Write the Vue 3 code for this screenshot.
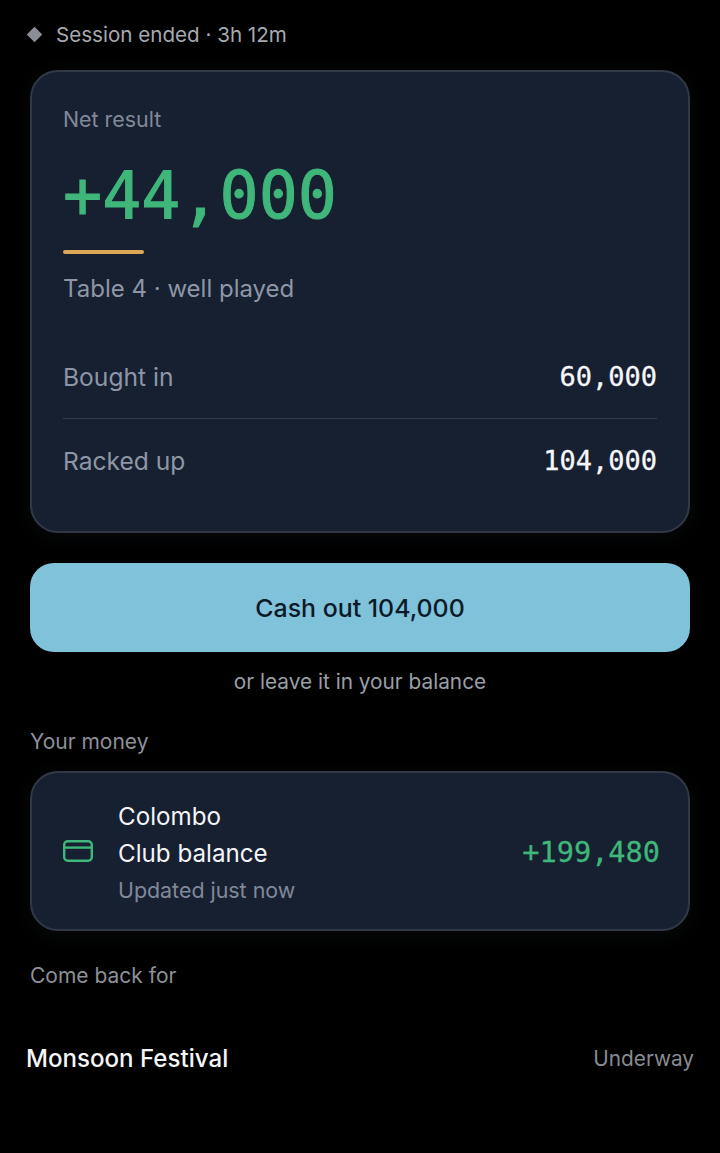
<script setup>
const rows = [
  { label: 'Bought in', value: '60,000' },
  { label: 'Racked up', value: '104,000' },
]
</script>

<template>
  <main class="page">
    <div class="status">
      <span class="diamond"></span>
      <span>Session ended · 3h 12m</span>
    </div>

    <section class="card result">
      <div class="eyebrow">Net result</div>
      <div class="net">+44,000</div>
      <div class="rule"></div>
      <div class="note">Table 4 · well played</div>
      <div class="rows">
        <div v-for="r in rows" :key="r.label" class="row">
          <span class="row-label">{{ r.label }}</span>
          <span class="row-value">{{ r.value }}</span>
        </div>
      </div>
    </section>

    <button class="cash">Cash out 104,000</button>
    <div class="leave">or leave it in your balance</div>

    <div class="section-title money-title">Your money</div>
    <section class="card money">
      <svg class="wallet" width="30" height="22" viewBox="0 0 30 22" fill="none" stroke="#3fb67a" stroke-width="2.4">
        <rect x="1.2" y="1.2" width="27.6" height="19.6" rx="3.6" />
        <path d="M1.2 7.6h27.6" />
      </svg>
      <div class="money-text">
        <div class="money-name">Colombo<br />Club balance</div>
        <div class="money-sub">Updated just now</div>
      </div>
      <div class="money-value">+199,480</div>
    </section>

    <div class="section-title back-title">Come back for</div>
    <div class="event">
      <span class="event-name">Monsoon Festival</span>
      <span class="event-state">Underway</span>
    </div>
  </main>
</template>

<style>
html, body { background: #000; }
</style>

<style scoped>
.page {
  box-sizing: border-box;
  width: 720px;
  height: 1153px;
  overflow: hidden;
  padding: 20px 30px 0;
  background: #000;
  font-family: "Inter", "Noto Sans", sans-serif;
  color: #fff;
}
.status {
  display: flex;
  align-items: center;
  gap: 16px;
  height: 28px;
  margin-left: -1px;
  font-size: 20.6px;
  color: #a6a9af;
}
.diamond {
  width: 11px;
  height: 11px;
  background: #8b8e95;
  transform: rotate(45deg);
}
.card {
  box-sizing: border-box;
  background: #172031;
  border: 2px solid #323946;
  border-radius: 28px;
  box-shadow: 0 4px 24px rgba(120, 140, 170, 0.07);
}
.result {
  height: 463px;
  margin-top: 22px;
  padding: 32px 31px 0;
}
.eyebrow {
  font-size: 21.4px;
  line-height: 30px;
  color: #818999;
}
.net {
  margin-top: 22px;
  font-family: "DejaVu Sans Mono", monospace;
  font-size: 65px;
  line-height: 80px;
  color: #3fb67a;
  -webkit-text-stroke: 1px #3fb67a;
}
.rule {
  width: 81px;
  height: 4px;
  margin-top: 14px;
  border-radius: 2px;
  background: #dca655;
}
.note {
  margin-top: 17px;
  font-size: 24px;
  line-height: 36px;
  color: #8e96a6;
}
.rows { margin-top: 28px; }
.row {
  display: flex;
  justify-content: space-between;
  align-items: center;
  height: 83px;
}
.row + .row { border-top: 1px solid #333a48; }
.row-label { font-size: 24.6px; color: #8e96a6; }
.row-value {
  font-family: "DejaVu Sans Mono", monospace;
  font-size: 27px;
  color: #f5f7fa;
  -webkit-text-stroke: 0.3px #f5f7fa;
}
.cash {
  display: block;
  width: 100%;
  height: 89px;
  margin-top: 30px;
  padding: 0;
  border: none;
  border-radius: 24px;
  background: #7fc2da;
  color: #0b1a28;
  font: 550 24.9px "Inter", "Noto Sans", sans-serif;
}
.leave {
  margin-top: 15px;
  text-align: center;
  font-size: 20.8px;
  line-height: 30px;
  color: #9a9ea6;
}
.section-title {
  font-size: 21px;
  line-height: 30px;
  color: #8d9098;
}
.money-title { margin-top: 30px; }
.money {
  display: flex;
  align-items: center;
  height: 160px;
  margin-top: 14px;
  padding: 4px 28px 0 31px;
}
.wallet { flex: none; margin-top: -4px; margin-right: 25px; }
.money-text { flex: 1; }
.money-name { font-size: 24.2px; line-height: 37px; color: #f3f5f8; }
.money-sub { font-size: 21.4px; line-height: 37px; color: #818999; }
.money-value {
  font-family: "DejaVu Sans Mono", monospace;
  font-size: 28.6px;
  line-height: 34px;
  margin-top: -2px;
  color: #3fb67a;
  -webkit-text-stroke: 0.3px #3fb67a;
}
.back-title { margin-top: 30px; }
.event {
  display: flex;
  justify-content: space-between;
  align-items: center;
  height: 40px;
  margin: 47px -4px 0;
}
.event-name { font-size: 24.1px; font-weight: 500; color: #f5f6f8; }
.event-state { font-size: 20.8px; color: #888b92; }
</style>
